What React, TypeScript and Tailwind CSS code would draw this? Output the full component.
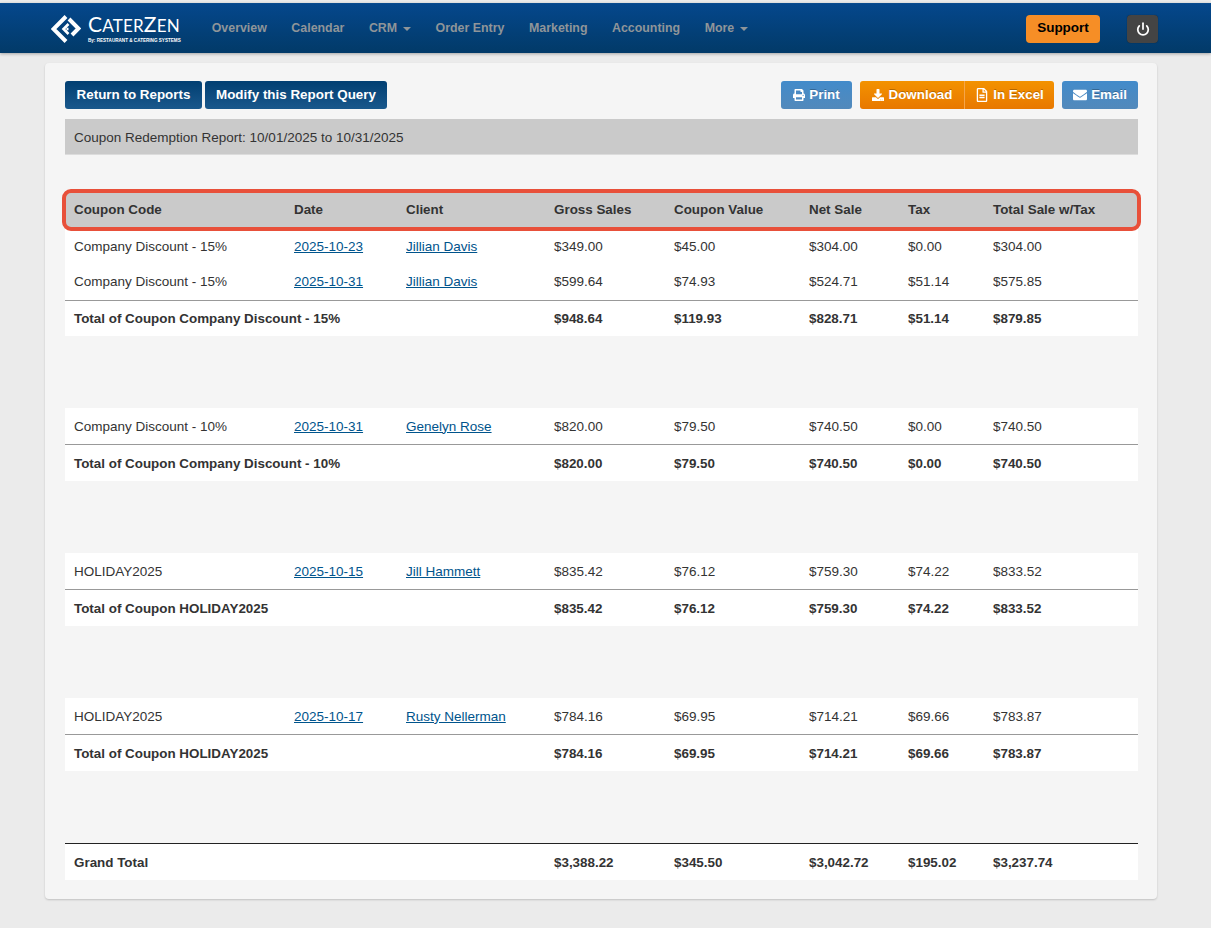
import { Power } from "lucide-react";
import { FaPrint, FaDownload, FaRegFileAlt, FaEnvelope } from "react-icons/fa";

const nav = ["Overview", "Calendar", "CRM", "Order Entry", "Marketing", "Accounting", "More"];

type Row = { code: string; date: string; client: string; vals: string[] };
type Group = { rows: Row[]; label: string; totals: string[] };

const groups: Group[] = [
  {
    rows: [
      { code: "Company Discount - 15%", date: "2025-10-23", client: "Jillian Davis", vals: ["$349.00", "$45.00", "$304.00", "$0.00", "$304.00"] },
      { code: "Company Discount - 15%", date: "2025-10-31", client: "Jillian Davis", vals: ["$599.64", "$74.93", "$524.71", "$51.14", "$575.85"] },
    ],
    label: "Total of Coupon Company Discount - 15%",
    totals: ["$948.64", "$119.93", "$828.71", "$51.14", "$879.85"],
  },
  {
    rows: [{ code: "Company Discount - 10%", date: "2025-10-31", client: "Genelyn Rose", vals: ["$820.00", "$79.50", "$740.50", "$0.00", "$740.50"] }],
    label: "Total of Coupon Company Discount - 10%",
    totals: ["$820.00", "$79.50", "$740.50", "$0.00", "$740.50"],
  },
  {
    rows: [{ code: "HOLIDAY2025", date: "2025-10-15", client: "Jill Hammett", vals: ["$835.42", "$76.12", "$759.30", "$74.22", "$833.52"] }],
    label: "Total of Coupon HOLIDAY2025",
    totals: ["$835.42", "$76.12", "$759.30", "$74.22", "$833.52"],
  },
  {
    rows: [{ code: "HOLIDAY2025", date: "2025-10-17", client: "Rusty Nellerman", vals: ["$784.16", "$69.95", "$714.21", "$69.66", "$783.87"] }],
    label: "Total of Coupon HOLIDAY2025",
    totals: ["$784.16", "$69.95", "$714.21", "$69.66", "$783.87"],
  },
];

const headers = ["Coupon Code", "Date", "Client", "Gross Sales", "Coupon Value", "Net Sale", "Tax", "Total Sale w/Tax"];

const Caret = () => <span className="ml-[6px] inline-block align-middle border-x-[4px] border-t-[4px] border-x-transparent border-t-[#8f9599]" />;

const Logo = () => (
  <div className="flex items-center gap-[7px] text-white">
    <svg width="30" height="30" viewBox="0 0 30 30" fill="none" stroke="white">
      <path d="M15 2.5 L2.5 15 L15 27.5" strokeWidth="4" />
      <path d="M18 5 L27.5 14.5 L21 21" strokeWidth="4" />
      <path d="M17.5 10 L12.5 15 L17.5 20 M17.5 15 L15.5 15" strokeWidth="2.6" />
    </svg>
    <div className="flex flex-col">
      <span className="text-[21px] leading-[22px] tracking-[0.2px] font-['Lato',sans-serif]">
        C<span className="text-[17px]">ATER</span>Z<span className="text-[17px]">EN</span>
      </span>
      <span className="text-[4.6px] leading-[7px] font-bold whitespace-nowrap">By: RESTAURANT &amp; CATERING SYSTEMS</span>
    </div>
  </div>
);

export default function App() {
  return (
    <div className="min-h-[928px] bg-[#ebebeb] pt-[3px] font-['Liberation_Sans',Arial,sans-serif] text-[13.5px] text-[#333]">
      <header className="h-[50px] flex items-center pl-[51px] pr-[53px] bg-gradient-to-b from-[#05478c] to-[#023a68] shadow-[0_1px_3px_rgba(0,0,0,0.3)] border-t border-[#0a4c8f]">
        <Logo />
        <nav className="flex items-center gap-[24.5px] ml-[31px] text-[12.4px] font-bold text-[#8f9599]">
          {nav.map((item) => (
            <span key={item} className="whitespace-nowrap">
              {item}
              {(item === "CRM" || item === "More") && <Caret />}
            </span>
          ))}
        </nav>
        <button className="ml-auto h-[28px] w-[74px] rounded-[4px] bg-[#f68e26] text-[13.5px] font-bold text-black">Support</button>
        <button className="ml-[27px] h-[28px] w-[31px] rounded-[4px] bg-[#444] flex items-center justify-center text-white shadow-[0_0_1px_rgba(0,0,0,0.5)]">
          <Power size={14} strokeWidth={3} />
        </button>
      </header>

      <main className="mt-[10px] ml-[45px] w-[1112px] h-[836px] rounded-[4px] bg-[#f5f5f5] shadow-[0_1px_2px_rgba(0,0,0,0.18)] pl-[20px] pr-[19px] pt-[18px]">
        <div className="flex items-center text-[13.4px] font-bold text-white h-[28px]">
          <button className="h-[28px] w-[137px] rounded-[3px] bg-gradient-to-b from-[#023f72] to-[#19588c]">Return to Reports</button>
          <button className="ml-[3px] h-[28px] w-[182px] rounded-[3px] bg-gradient-to-b from-[#023f72] to-[#19588c]">Modify this Report Query</button>
          <button className="ml-auto h-[28px] w-[71px] rounded-[3px] bg-gradient-to-b from-[#428bca] to-[#5289bb] flex items-center justify-center gap-[4px] [text-shadow:0_-1px_0_rgba(0,0,0,0.25)]">
            <FaPrint size={12} />Print
          </button>
          <div className="ml-[8px] h-[28px] w-[194px] flex rounded-[3px] bg-gradient-to-b from-[#f39200] to-[#e87800] [text-shadow:0_-1px_0_rgba(0,0,0,0.25)]">
            <span className="w-[105px] flex items-center justify-center gap-[5px] border-r border-[#f5a54a]">
              <FaDownload size={12} />Download
            </span>
            <span className="flex-1 flex items-center justify-center gap-[4px]">
              <FaRegFileAlt size={14} />In Excel
            </span>
          </div>
          <button className="ml-[8px] h-[28px] w-[76px] rounded-[3px] bg-gradient-to-b from-[#428bca] to-[#5289bb] flex items-center justify-center gap-[4px] [text-shadow:0_-1px_0_rgba(0,0,0,0.25)]">
            <FaEnvelope size={14} />Email
          </button>
        </div>

        <div className="mt-[10px] h-[36px] flex items-center px-[9px] pt-[3px] bg-[#cacaca] border-b border-[#dcdcdc] text-[#333]">
          Coupon Redemption Report: 10/01/2025 to 10/31/2025
        </div>

        <div className="relative mt-[36px]">
          <table className="w-[1073px] table-fixed border-collapse">
            <colgroup>
              <col className="w-[220px]" />
              <col className="w-[112px]" />
              <col className="w-[148px]" />
              <col className="w-[120px]" />
              <col className="w-[135px]" />
              <col className="w-[99px]" />
              <col className="w-[85px]" />
              <col className="w-[154px]" />
            </colgroup>
            <thead>
              <tr className="h-[37px] bg-[#cacaca]">
                {headers.map((h) => (
                  <th key={h} className="pl-[9px] pt-[2px] text-left font-bold whitespace-nowrap text-[13.4px]">{h}</th>
                ))}
              </tr>
            </thead>
            {groups.map((g, i) => (
              <tbody key={i}>
                {g.rows.map((r, j) => {
                  const cell = i === 0 && j === 1 ? "pl-[9px]" : "pl-[9px] pt-[2px]";
                  return (
                    <tr key={j} className="h-[36px] bg-white">
                      <td className={`${cell} whitespace-nowrap`}>{r.code}</td>
                      <td className={cell}><a className="text-[#00548c] underline">{r.date}</a></td>
                      <td className={`${cell} whitespace-nowrap`}><a className="text-[#00548c] underline">{r.client}</a></td>
                      {r.vals.map((v, k) => <td key={k} className={cell}>{v}</td>)}
                    </tr>
                  );
                })}
                <tr className={i === 0 ? "h-[36px] bg-white border-t border-[#999] font-bold text-[13.4px]" : "h-[37px] bg-white border-t border-[#999] font-bold text-[13.4px]"}>
                  <td colSpan={3} className="pl-[9px] pt-[2px]">{g.label}</td>
                  {g.totals.map((v, k) => <td key={k} className="pl-[9px] pt-[2px]">{v}</td>)}
                </tr>
                <tr className="h-[72px]"><td colSpan={8} /></tr>
              </tbody>
            ))}
            <tbody>
              <tr className="h-[37px] bg-white border-t border-[#222] font-bold text-[13.4px]">
                <td colSpan={3} className="pl-[9px] pt-[2px]">Grand Total</td>
                {["$3,388.22", "$345.50", "$3,042.72", "$195.02", "$3,237.74"].map((v) => (
                  <td key={v} className="pl-[9px] pt-[2px]">{v}</td>
                ))}
              </tr>
            </tbody>
          </table>
          <div className="absolute left-[-3px] top-[-2px] w-[1079px] h-[42px] rounded-[9px] border-[4px] border-[#e8503a] pointer-events-none" />
        </div>
      </main>
    </div>
  );
}
